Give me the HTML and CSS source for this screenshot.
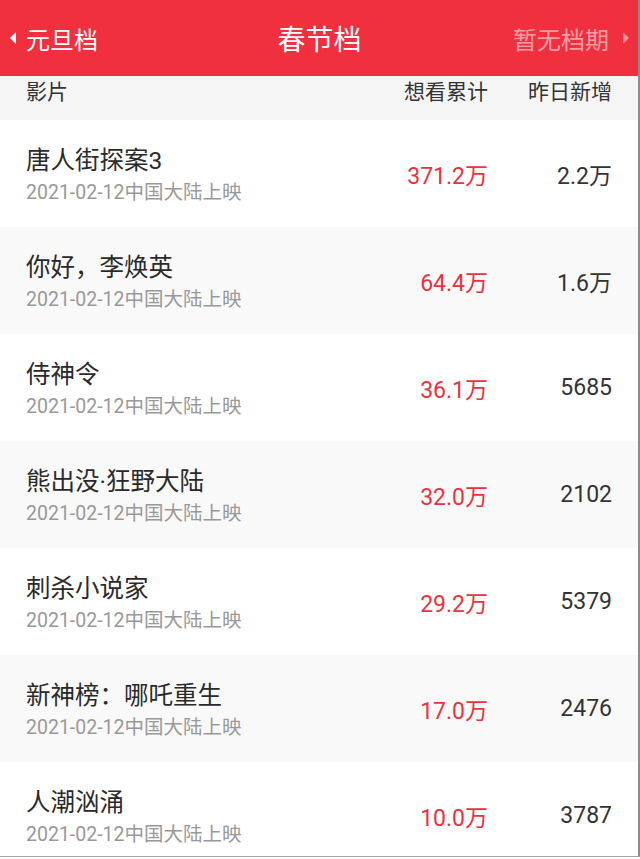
FILE: index.html
```html
<!DOCTYPE html>
<html lang="zh-CN">
<head>
    <meta charset="UTF-8">
    <meta name="viewport" content="width=device-width, initial-scale=1.0">
    <title>春节档</title>
    <link rel="stylesheet" href="styles.css">
</head>
<body>
<div class="app">
    <header class="topbar">
        <a class="nav prev"><span class="arrow arrow-left"></span>元旦档</a>
        <h1>春节档</h1>
        <a class="nav next disabled">暂无档期<span class="arrow arrow-right"></span></a>
    </header>

    <div class="table-head">
        <span class="col-name">影片</span>
        <span class="col-total">想看累计</span>
        <span class="col-new">昨日新增</span>
    </div>

    <ul class="movie-list">
        <li class="movie">
            <div class="col-name">
                <p class="title">唐人街探案3</p>
                <p class="date">2021-02-12中国大陆上映</p>
            </div>
            <span class="col-total">371.2万</span>
            <span class="col-new">2.2万</span>
        </li>
        <li class="movie">
            <div class="col-name">
                <p class="title">你好，李焕英</p>
                <p class="date">2021-02-12中国大陆上映</p>
            </div>
            <span class="col-total">64.4万</span>
            <span class="col-new">1.6万</span>
        </li>
        <li class="movie">
            <div class="col-name">
                <p class="title">侍神令</p>
                <p class="date">2021-02-12中国大陆上映</p>
            </div>
            <span class="col-total">36.1万</span>
            <span class="col-new">5685</span>
        </li>
        <li class="movie">
            <div class="col-name">
                <p class="title">熊出没·狂野大陆</p>
                <p class="date">2021-02-12中国大陆上映</p>
            </div>
            <span class="col-total">32.0万</span>
            <span class="col-new">2102</span>
        </li>
        <li class="movie">
            <div class="col-name">
                <p class="title">刺杀小说家</p>
                <p class="date">2021-02-12中国大陆上映</p>
            </div>
            <span class="col-total">29.2万</span>
            <span class="col-new">5379</span>
        </li>
        <li class="movie">
            <div class="col-name">
                <p class="title">新神榜：哪吒重生</p>
                <p class="date">2021-02-12中国大陆上映</p>
            </div>
            <span class="col-total">17.0万</span>
            <span class="col-new">2476</span>
        </li>
        <li class="movie">
            <div class="col-name">
                <p class="title">人潮汹涌</p>
                <p class="date">2021-02-12中国大陆上映</p>
            </div>
            <span class="col-total">10.0万</span>
            <span class="col-new">3787</span>
        </li>
    </ul>
</div>
</body>
</html>
```

FILE: styles.css
```css
body {
    margin: 0;
    padding: 0;
    background: #ffffff;
    font-family: Roboto, "Noto Sans CJK SC", sans-serif;
    color: #333;
}
.app {
    width: 638px;
    height: 856px;
    overflow: hidden;
    border-right: 2px solid #8c8c8c;
    border-bottom: 1px solid #a6a6a6;
    background: #fff;
}
.topbar {
    height: 76px;
    background-color: #f0303f;
    display: flex;
    align-items: center;
    justify-content: space-between;
    padding: 0 9px 0 10px;
    box-sizing: border-box;
    color: #fff;
}
.topbar h1 {
    margin: 0;
    font-size: 28px;
    font-weight: normal;
    padding-left: 28px;
}
.nav {
    display: flex;
    align-items: center;
    font-size: 24px;
    gap: 10px;
}
.nav.disabled {
    color: rgba(255, 255, 255, 0.55);
}
.arrow {
    width: 0;
    height: 0;
    border-top: 6px solid transparent;
    border-bottom: 6px solid transparent;
}
.arrow-left {
    border-right: 6px solid #fff;
}
.arrow-right {
    border-left: 6px solid rgba(255, 255, 255, 0.45);
    margin-left: 4px;
}
.table-head {
    height: 44px;
    background: #f5f5f5;
    display: flex;
    align-items: flex-start;
    padding: 2px 26px 0 26px;
    box-sizing: border-box;
    font-size: 21px;
    color: #333;
    line-height: 28px;
}
.col-name {
    flex: 1;
}
.col-total {
    width: 120px;
    text-align: right;
}
.col-new {
    width: 124px;
    text-align: right;
}
.movie-list {
    list-style: none;
    margin: 0;
    padding: 0;
}
.movie {
    height: 107px;
    display: flex;
    align-items: center;
    padding: 0 26px;
    box-sizing: border-box;
}
.movie:nth-child(even) {
    background: #f9f9f9;
}
.movie p {
    margin: 0;
}
.movie .col-name {
    padding-top: 4px;
}
.movie .title {
    font-size: 24.5px;
    line-height: 32px;
    color: #2a2a2a;
}
.movie .date {
    font-size: 19.5px;
    line-height: 28px;
    color: #999;
    margin-top: 2px;
}
.movie .col-total {
    color: #e83341;
    font-size: 23px;
}
.movie .col-new {
    color: #333;
    font-size: 23px;
}
```
